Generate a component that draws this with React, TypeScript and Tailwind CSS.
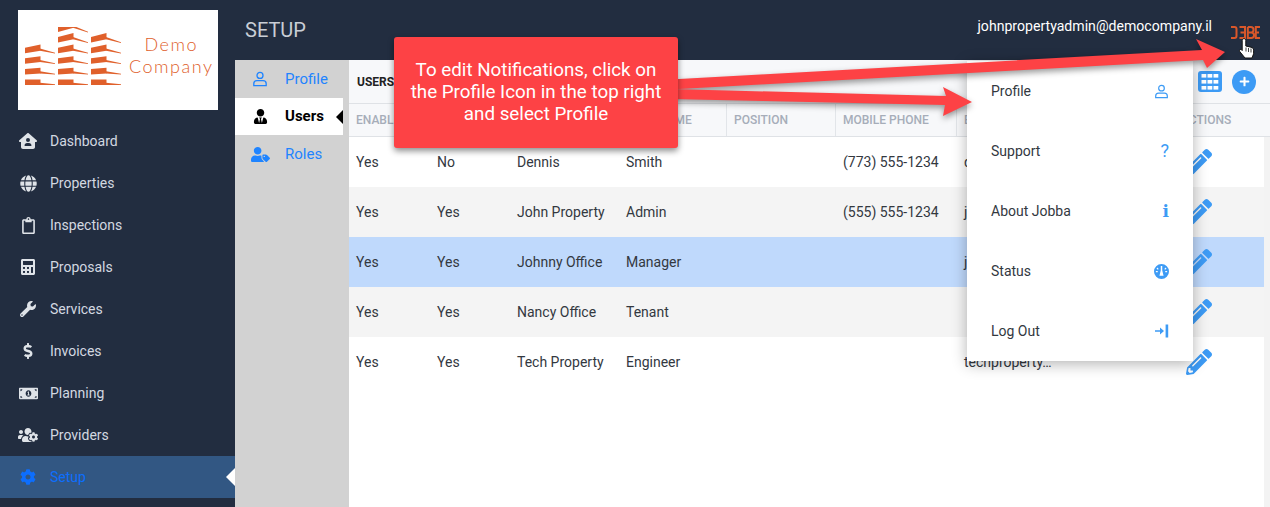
import {
  FaCalculator,
  FaCog,
  FaDollarSign,
  FaGlobe,
  FaMoneyBillAlt,
  FaPencilAlt,
  FaPlus,
  FaRegClipboard,
  FaUsersCog,
  FaUserTag,
  FaUserTie,
  FaWrench,
} from "react-icons/fa";
import { FaHouseUser } from "react-icons/fa6";

const nav = [
  { label: "Dashboard", icon: <FaHouseUser size={18} /> },
  { label: "Properties", icon: <FaGlobe size={17} /> },
  { label: "Inspections", icon: <FaRegClipboard size={17} /> },
  { label: "Proposals", icon: <FaCalculator size={16} /> },
  { label: "Services", icon: <FaWrench size={16} /> },
  { label: "Invoices", icon: <FaDollarSign size={16} /> },
  { label: "Planning", icon: <FaMoneyBillAlt size={19} /> },
  { label: "Providers", icon: <FaUsersCog size={20} /> },
];

const rows = [
  ["Yes", "No", "Dennis", "Smith", "", "(773) 555-1234", "dennis…"],
  ["Yes", "Yes", "John Property", "Admin", "", "(555) 555-1234", "john…"],
  ["Yes", "Yes", "Johnny Office", "Manager", "", "", "johnny…"],
  ["Yes", "Yes", "Nancy Office", "Tenant", "", "", ""],
  ["Yes", "Yes", "Tech Property", "Engineer", "", "", "techproperty…"],
];

const columns = ["ENABLED", "ACTIVE", "FIRST NAME", "LAST NAME", "POSITION", "MOBILE PHONE", "EMAIL", "ACTIONS"];

function UserOutline({ className }: { className?: string }) {
  return (
    <svg viewBox="0 0 16 16" className={className} fill="none" stroke="currentColor" strokeWidth="1.3">
      <circle cx="8" cy="4.4" r="3" />
      <path d="M1.8 14.6v-1.8c0-1.7 1.4-3.1 3.1-3.1h6.2c1.7 0 3.1 1.4 3.1 3.1v1.8z" />
    </svg>
  );
}

function StatusIcon() {
  return (
    <svg viewBox="0 0 16 16" className="w-[15px] h-[15px]" fill="#3d9bf5">
      <path d="M8 0a8 8 0 1 1 0 16A8 8 0 0 1 8 0zM7.200 2.200v4.600l-1.400 5.600h4.400L8.800 6.800V2.200zM3.600 3.800l-.9.9 1.400 1.400.9-.9zM12.400 3.800l-1.400 1.400.9.9 1.400-1.400zM2 7.400v1.300h2V7.400zM12 7.400v1.300h2V7.400z" fillRule="evenodd" />
    </svg>
  );
}

function LogOutIcon() {
  return (
    <svg viewBox="0 0 14 14" className="w-[14px] h-[14px]" fill="#3d9bf5">
      <rect x="10.6" y="0.5" width="2.6" height="13" />
      <path d="M0 6.200h5V3.600L9 7l-4 3.400V7.800H0z" />
    </svg>
  );
}

function BuildingLogo() {
  // each floor flattens out towards the ground, like the perspective in the logo
  const tower = (x: number, floors: number) =>
    Array.from({ length: floors }, (_, i) => {
      const depth = floors - 1 - i;
      const base = 58 - depth * 10.6;
      const s = depth * 1.05;
      return (
        <g key={`${x}-${i}`} fill="#e0602b">
          <path d={`M${x} ${base - 5.5}L${x + 15.5} ${base - 5.5 - s}L${x + 15.5} ${base - s * 0.8}L${x} ${base}z`} />
          <path d={`M${x + 15} ${base - s * 0.8 - 2.2}L${x + 30} ${base - s * 0.8 + s * 0.9 - 0.7}L${x + 30} ${base - s * 0.8 + s * 0.9}L${x + 15} ${base - s * 0.8}z`} />
        </g>
      );
    });

  return (
    <svg viewBox="0 0 96 58" className="w-[96px] h-[58px] shrink-0">
      {tower(0, 4)}
      {tower(33, 6)}
      {tower(66, 5)}
    </svg>
  );
}

function Sidebar() {
  return (
    <aside className="w-[235px] shrink-0 bg-[#222d40] flex flex-col">
      <div className="mt-[10px] ml-[18px] w-[200px] h-[100px] bg-white flex items-start pl-[7px] pt-[17px]">
        <BuildingLogo />
        <div className="ml-[8px] mt-[6px] text-center text-[#e0602b] text-[18px] leading-[22px] tracking-[1.5px] font-light font-['Lato',sans-serif]">
          <div>Demo</div>
          <div>Company</div>
        </div>
      </div>
      <nav className="mt-[10px] flex flex-col">
        {nav.map((item) => (
          <div key={item.label} className="h-[42px] flex items-center text-[#d3d8e0] text-[14px]">
            <span className="w-[20px] ml-[18px] mr-[12px] flex justify-center text-[#dfe3e8]">{item.icon}</span>
            {item.label}
          </div>
        ))}
        <div className="relative h-[42px] flex items-center bg-[#325783] text-[#0d6efd] text-[14px]">
          <span className="w-[20px] ml-[18px] mr-[12px] flex justify-center"><FaCog size={16} /></span>
          Setup
          <span className="absolute right-0 top-[12px] w-0 h-0 border-y-[9px] border-y-transparent border-r-[9px] border-r-white" />
        </div>
      </nav>
    </aside>
  );
}

function SubNav() {
  return (
    <div className="w-[114px] shrink-0 bg-[#d2d2d2] flex flex-col text-[15px]">
      <div className="h-[38px] flex items-center text-[#1f84ff]">
        <span className="w-[50px] flex justify-center"><UserOutline className="w-[16px] h-[16px]" /></span>
        Profile
      </div>
      <div className="relative h-[37px] w-[108px] flex items-center bg-white text-black font-bold">
        <span className="w-[50px] flex justify-center"><FaUserTie size={15} /></span>
        Users
        <span className="absolute right-0 top-[12px] w-0 h-0 border-y-[7px] border-y-transparent border-r-[7px] border-r-black" />
      </div>
      <div className="h-[39px] flex items-center text-[#1f84ff]">
        <span className="w-[50px] flex justify-center"><FaUserTag size={19} /></span>
        Roles
      </div>
    </div>
  );
}

function GridIcon() {
  const cells = [];
  for (let r = 0; r < 3; r++) {
    for (let c = 0; c < 3; c++) {
      cells.push(<rect key={`${r}-${c}`} x={3.5 + c * 6} y={3 + r * 6} width="4.8" height="3.6" fill="#fff" />);
    }
  }
  return (
    <svg viewBox="0 0 24 21" className="w-[24px] h-[21px]">
      <rect width="24" height="21" rx="3" fill="#3d9bf5" />
      {cells}
    </svg>
  );
}

function UsersTable() {
  const grid = "grid grid-cols-[81px_80px_109px_108px_109px_121px_217px_1fr]";
  return (
    <div className="flex-1 min-w-0 bg-white flex flex-col text-[14px] text-[#33383f]">
      <div className="h-[44px] shrink-0 flex items-center pl-[8px] pr-[14px] bg-[#f7f8fa] border-b border-[#dfe2e6]">
        <span className="text-[12px] font-bold text-[#222]">USERS</span>
        <div className="ml-auto flex items-center gap-[10px]">
          <GridIcon />
          <span className="w-[24px] h-[24px] rounded-full bg-[#3d9bf5] text-white flex items-center justify-center"><FaPlus size={11} /></span>
        </div>
      </div>
      <div className={`h-[33px] shrink-0 ${grid} border-b border-[#dfe2e6] bg-[#f7f8fa] text-[12px] font-medium text-[#a6adb9]`}>
        {columns.map((c) => (
          <div key={c} className="px-[7px] flex items-center border-r border-[#e2e5e9] last:border-r-0">{c}</div>
        ))}
      </div>
      <div className="flex-1 min-h-0 bg-[#f3f3f3]">
        <div className="h-full mr-[6px] bg-white">
          {rows.map((row, i) => (
            <div
              key={row[2]}
              className={`h-[50px] ${grid} items-center ${
                i === 2 ? "bg-[#bfd9fc]" : i % 2 === 1 ? "bg-[#f4f4f4]" : "bg-white"
              }`}
            >
              {row.map((cell, j) => (
                <div key={j} className="px-[7px] whitespace-nowrap overflow-hidden">{cell}</div>
              ))}
              <div className="pl-[12px] text-[#3d9bf5]"><FaPencilAlt size={26} /></div>
            </div>
          ))}
        </div>
      </div>
    </div>
  );
}

function ProfileMenu() {
  const items = [
    { label: "Profile", icon: <UserOutline className="w-[15px] h-[15px] text-[#3d9bf5]" /> },
    { label: "Support", icon: <span className="text-[#3d9bf5] text-[18px] leading-none">?</span> },
    { label: "About Jobba", icon: <span className="text-[#3d9bf5] text-[17px] leading-none font-bold font-['DejaVu_Serif',serif]">i</span> },
    { label: "Status", icon: <StatusIcon /> },
    { label: "Log Out", icon: <LogOutIcon /> },
  ];
  return (
    <div className="absolute left-[967px] top-[61px] w-[226px] h-[300px] bg-white shadow-[0_3px_14px_rgba(0,0,0,0.3)] flex flex-col text-[14px] text-[#33383f]">
      {items.map((item) => (
        <div key={item.label} className="h-[60px] flex items-center justify-between pl-[24px] pr-[24px]">
          <span>{item.label}</span>
          {item.icon}
        </div>
      ))}
    </div>
  );
}

function Annotation() {
  return (
    <>
      <svg viewBox="0 0 1270 507" className="absolute inset-0 w-[1270px] h-[507px] pointer-events-none drop-shadow-[0_3px_3px_rgba(0,0,0,0.4)]">
        <path d="M670 79.500L1202 50L1196 39L1225 52L1207 68L1203 60L670 89.500z" fill="#fd4245" />
        <path d="M670 89L946 96L943 87L972 102L943 116L945 105L670 99z" fill="#fd4245" />
      </svg>
      <div className="absolute left-[394px] top-[37px] w-[284px] h-[111px] pb-[2px] rounded-[3px] bg-[#fd4245] shadow-[0_3px_6px_rgba(0,0,0,0.45)] flex items-center justify-center text-center text-white text-[18.8px] leading-[22px]">
        <p>
          To edit Notifications, click on
          <br />
          the Profile Icon in the top right
          <br />
          and select Profile
        </p>
      </div>
    </>
  );
}

function JobbaLogo() {
  return (
    <svg viewBox="0 0 30 13" className="w-[30px] h-[13px]" fill="none" stroke="#d9572a" strokeWidth="2">
      <path d="M1 1h3.500a2 2 0 0 1 2 2v7a2 2 0 0 1-2 2H1" />
      <path d="M9.500 1h5.500v11H9.500M10.500 6.500H15" />
      <path d="M17.800 1v11h3.500a2.500 2.500 0 0 0 0-5.500h-3.500M17.800 1h3a2.500 2.500 0 0 1 0 5.500" />
      <path d="M30 1h-4.200v11H30M25.800 6.500H29" />
    </svg>
  );
}

function HandCursor() {
  return (
    <svg viewBox="0 0 17 21" className="absolute left-[1238px] top-[38px] w-[17px] h-[21px]">
      <path
        d="M6 .7c1.100 0 1.800.8 1.800 1.900V8l5.200 1.200c1.700.4 2.600 1.300 2.600 3v3.600L14 20H7l-5.200-6.400c-1-1.300.6-2.900 1.900-1.800L4.200 12.500V2.600C4.200 1.500 4.900.7 6 .7z"
        fill="#fff"
        stroke="#111"
        strokeWidth="1"
      />
      <path d="M8 9.500v4M10.500 10v4M13 10.500v4" stroke="#111" strokeWidth="0.8" />
    </svg>
  );
}

export default function App() {
  return (
    <div className="relative w-[1270px] h-[507px] overflow-hidden flex bg-[#222d40] font-['Roboto',sans-serif]">
      <Sidebar />
      <div className="flex-1 min-w-0 flex flex-col">
        <header className="h-[60px] shrink-0 flex items-start justify-between">
          <h1 className="ml-[10px] mt-[17px] text-[20px] leading-[26px] text-[#c9ced6]">SETUP</h1>
          <div className="mt-[16px] mr-[10px] flex items-start gap-[18px]">
            <span className="text-[14.1px] leading-[20px] text-white">johnpropertyadmin@democompany.il</span>
            <span className="mt-[10px]"><JobbaLogo /></span>
          </div>
        </header>
        <div className="flex flex-1 min-h-0">
          <SubNav />
          <UsersTable />
        </div>
      </div>
      <ProfileMenu />
      <Annotation />
      <HandCursor />
    </div>
  );
}
